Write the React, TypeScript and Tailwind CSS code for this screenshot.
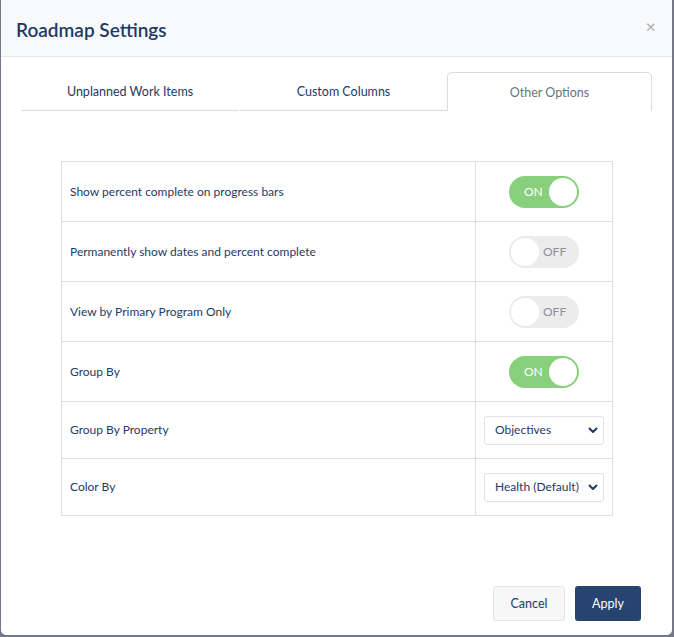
import { useState } from "react";

type Row = {
  label: string;
  kind: "toggle" | "select";
  on?: boolean;
  value?: string;
  options?: string[];
};

const rows: Row[] = [
  { label: "Show percent complete on progress bars", kind: "toggle", on: true },
  { label: "Permanently show dates and percent complete", kind: "toggle", on: false },
  { label: "View by Primary Program Only", kind: "toggle", on: false },
  { label: "Group By", kind: "toggle", on: true },
  { label: "Group By Property", kind: "select", value: "Objectives", options: ["Objectives", "Programs", "Teams"] },
  { label: "Color By", kind: "select", value: "Health (Default)", options: ["Health (Default)", "Status", "Program"] },
];

const tabs = ["Unplanned Work Items", "Custom Columns", "Other Options"];

function Toggle({ on, onChange }: { on: boolean; onChange: () => void }) {
  return (
    <button
      onClick={onChange}
      className={`relative w-[70px] h-[32px] rounded-full flex items-center ${
        on ? "bg-[#88d07c]" : "bg-[#ececec]"
      }`}
    >
      {on ? (
        <>
          <span className="absolute left-[15px] text-[12px] text-white">ON</span>
          <span className="absolute right-[2px] w-[28px] h-[28px] rounded-full bg-white" />
        </>
      ) : (
        <>
          <span className="absolute left-[2px] w-[28px] h-[28px] rounded-full bg-white" />
          <span className="absolute left-[34px] text-[12px] text-[#8a8f98]">OFF</span>
        </>
      )}
    </button>
  );
}

function Select({ value, options }: { value: string; options: string[] }) {
  const [v, setV] = useState(value);
  return (
    <div className="relative w-[120px] h-[29px]">
      <select
        value={v}
        onChange={(e) => setV(e.target.value)}
        className="appearance-none w-full h-full border border-[#e2e2e2] rounded-[3px] bg-white pl-[10px] text-[12px] text-[#1f3a66] outline-none"
      >
        {options.map((o) => (
          <option key={o}>{o}</option>
        ))}
      </select>
      <svg
        className="absolute right-[6px] top-[11px] pointer-events-none"
        width="10"
        height="7"
        viewBox="0 0 10 7"
      >
        <path d="M1.5 1.5 L5 5 L8.5 1.5" fill="none" stroke="#1f3a66" strokeWidth="2" strokeLinecap="round" strokeLinejoin="round" />
      </svg>
    </div>
  );
}

export default function App() {
  const [active, setActive] = useState(2);
  const [toggles, setToggles] = useState(rows.map((r) => !!r.on));

  return (
    <div
      className="w-[674px] h-[637px] bg-[#737a86] pl-[1px] pr-[2px] pb-[2px]"
      style={{ fontFamily: "Lato, 'Open Sans', sans-serif" }}
    >
      <div className="w-full h-full bg-white rounded-b-[5px] flex flex-col overflow-hidden">
        {/* header */}
        <div className="h-[57px] shrink-0 bg-[#f8f9fa] border-b border-[#e6e6e6] flex items-center justify-between pl-[15px] pr-[16px]">
          <h1 className="text-[19px] font-semibold text-[#1f3a66] leading-none pt-[2px]">Roadmap Settings</h1>
          <button className="text-[#a8adb4] text-[18px] leading-none pb-[4px]">×</button>
        </div>

        {/* tabs */}
        <div className="flex ml-[20px] mt-[15px] h-[39px] shrink-0">
          {tabs.map((t, i) => (
            <button
              key={t}
              onClick={() => setActive(i)}
              className={`h-full shrink-0 text-[12.5px] pt-[2px] ${i === 0 ? "w-[218px]" : i === 1 ? "w-[207px] ml-[1px]" : "w-[205px]"} ${
                active === i
                  ? "border border-b-0 border-[#dcdcdc] rounded-t-[5px] text-[#6b7280] bg-white"
                  : "border-b border-[#dcdcdc] text-[#1f3a66]"
              }`}
            >
              {t}
            </button>
          ))}
        </div>

        {/* table */}
        <div className="mt-[50px] ml-[60px] w-[552px] border border-[#dedede]">
          {rows.map((r, i) => (
            <div
              key={r.label}
              className={`flex ${i === 0 ? "h-[59px]" : r.kind === "toggle" ? "h-[60px]" : "h-[57px]"} ${i > 0 ? "border-t border-[#dedede]" : ""}`}
            >
              <div className="w-[414px] border-r border-[#dedede] flex items-center pl-[8px] text-[12px] text-[#1f3a66]">
                {r.label}
              </div>
              <div className="flex-1 flex items-center">
                {r.kind === "toggle" ? (
                  <div className="ml-[33px] flex">
                    <Toggle
                      on={toggles[i]}
                      onChange={() => setToggles(toggles.map((x, j) => (j === i ? !x : x)))}
                    />
                  </div>
                ) : (
                  <div className="ml-[8px] flex">
                    <Select value={r.value!} options={r.options!} />
                  </div>
                )}
              </div>
            </div>
          ))}
        </div>

        {/* footer */}
        <div className="mt-auto mb-[14px] flex justify-end gap-[10px] pr-[31px]">
          <button className="w-[72px] h-[35px] bg-[#f7f7f7] border border-[#e4e4e4] rounded-[3px] text-[12.5px] text-[#1f3a66] pt-[2px]">
            Cancel
          </button>
          <button className="w-[66px] h-[35px] bg-[#27436f] rounded-[3px] text-[12.5px] text-white pt-[2px]">
            Apply
          </button>
        </div>
      </div>
    </div>
  );
}
